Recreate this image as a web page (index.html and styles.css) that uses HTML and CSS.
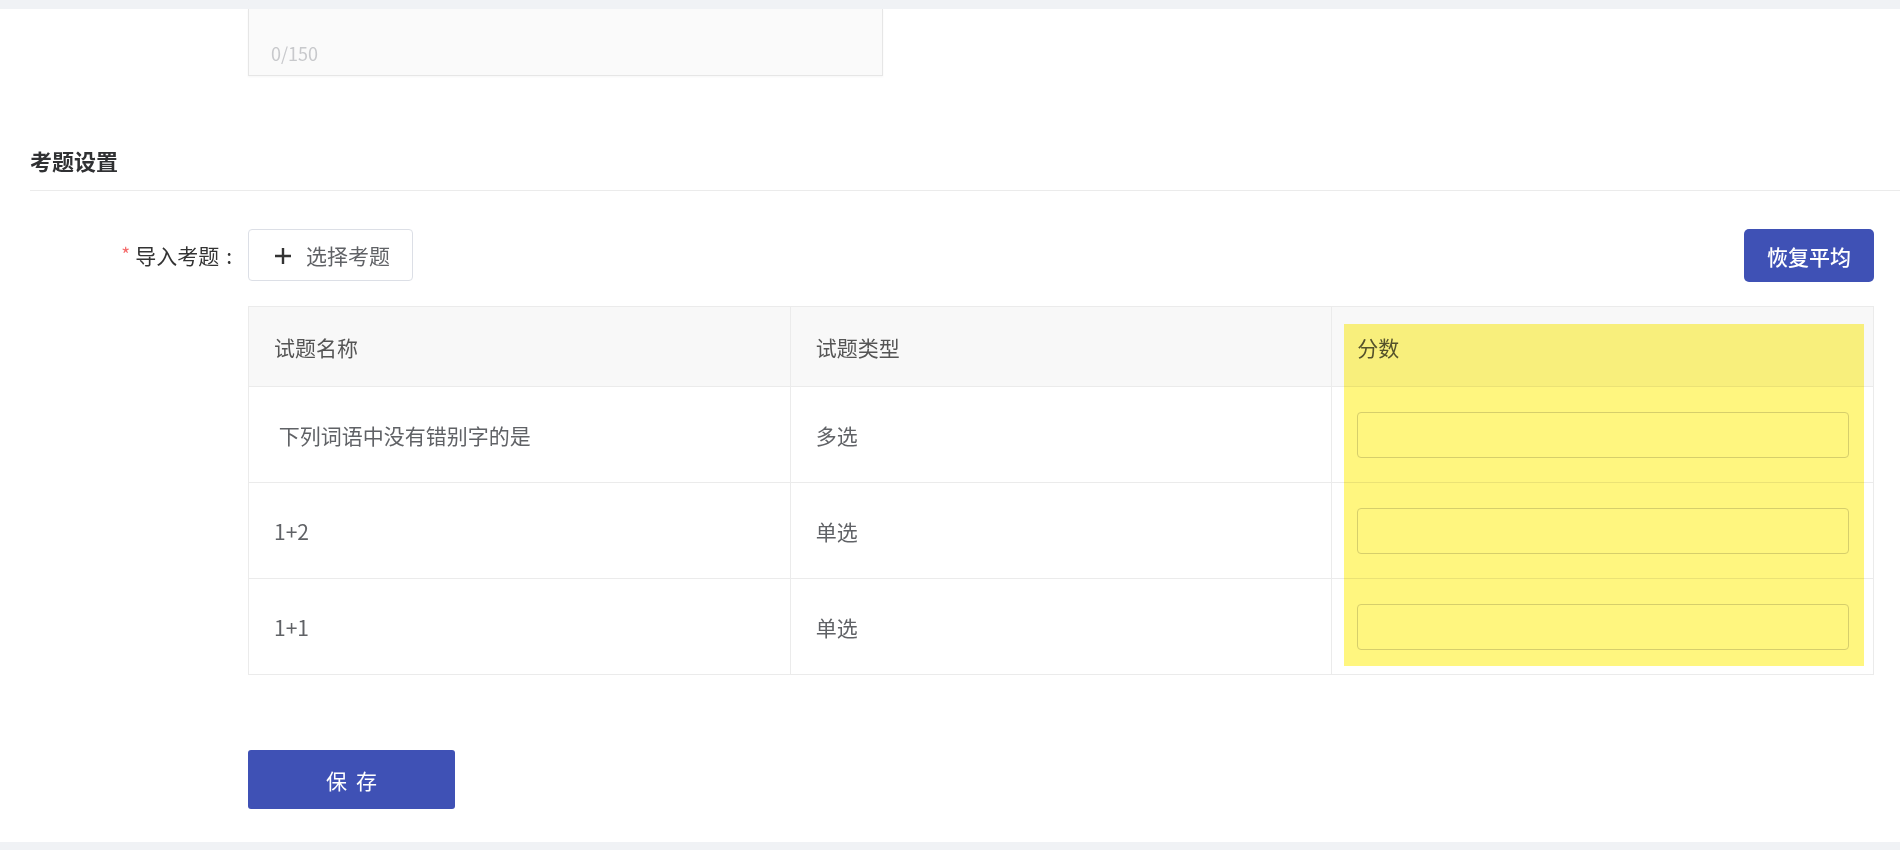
FILE: index.html
```html
<!DOCTYPE html>
<html lang="zh-CN">
<head>
  <meta charset="UTF-8">
  <meta name="viewport" content="width=device-width, initial-scale=1.0">
  <title>考题设置</title>
  <link rel="stylesheet" href="styles.css">
</head>
<body>
  <div class="page">
    <main class="panel">
      <!-- Remark box (scrolled, top cut off) -->
      <div class="remark">
        <span class="remark-count">0/150</span>
      </div>

      <h2 class="section-title">考题设置</h2>

      <!-- Questions -->
      <div class="form-item first">
        <label class="form-label"><span class="required">*</span>导入考题<span class="colon">:</span></label>
        <div class="form-content">
          <div class="toolbar">
            <button type="button" class="btn-plain">
              <svg width="16" height="16" viewBox="0 0 16 16"><path d="M8 0v16M0 8h16" stroke="#333" stroke-width="2.4" fill="none"/></svg>
              <span>选择考题</span>
            </button>
            <button type="button" class="btn-primary">恢复平均</button>
          </div>

          <div class="table-wrap">
            <table class="question-table">
              <thead>
                <tr>
                  <th>试题名称</th>
                  <th>试题类型</th>
                  <th>分数</th>
                </tr>
              </thead>
              <tbody>
                <tr>
                  <td>&nbsp;下列词语中没有错别字的是</td>
                  <td>多选</td>
                  <td class="score-cell"><input type="text" class="score-input"></td>
                </tr>
                <tr>
                  <td>1+2</td>
                  <td>单选</td>
                  <td class="score-cell"><input type="text" class="score-input"></td>
                </tr>
                <tr>
                  <td>1+1</td>
                  <td>单选</td>
                  <td class="score-cell"><input type="text" class="score-input"></td>
                </tr>
              </tbody>
            </table>
            <div class="highlight"></div>
          </div>
        </div>
      </div>

      <div class="form-item">
        <div class="form-label"></div>
        <div class="form-content">
          <button type="submit" class="btn-save">保存</button>
        </div>
      </div>
    </main>
  </div>
</body>
</html>
```

FILE: styles.css
```css
* {
  margin: 0;
  padding: 0;
  box-sizing: border-box;
}

body {
  background: #f0f2f5;
  font-family: "Noto Sans CJK SC", "Microsoft YaHei", sans-serif;
  color: #606266;
}

.page {
  padding: 9px 0 8px;
}

.panel {
  background: #fff;
  height: 833px;
  padding-right: 26px;
  overflow: hidden;
}

/* Remark box */
.remark {
  margin-left: 248px;
  width: 635px;
  height: 67px;
  background: #fafafa;
  border: 1px solid #e6e6e6;
  border-top: none;
  box-shadow: 0 1px 2px rgba(0, 0, 0, 0.04);
  display: flex;
  align-items: flex-end;
  padding: 0 22px 13px;
}

.remark-count {
  font-size: 18px;
  line-height: 18px;
  color: #c8c9cc;
}

/* Section title */
.section-title {
  margin: 69px -26px 0 30px;
  font-size: 22px;
  line-height: 30px;
  font-weight: 600;
  color: #303133;
  padding-bottom: 15px;
  border-bottom: 1px solid #ebebeb;
}

/* Form */
.form-item {
  display: flex;
  margin-top: 37px;
}

.form-item.first {
  margin-top: 38px;
}

.form-label {
  width: 248px;
  flex-shrink: 0;
  height: 52px;
  display: flex;
  align-items: center;
  justify-content: flex-end;
  padding-right: 16px;
  font-size: 21px;
  color: #333;
}

.required {
  color: #f56c6c;
  font-size: 19px;
  margin: 0 5px 3px 0;
}

.colon {
  margin-left: 7px;
}

.form-content {
  flex: 1;
}

.toolbar {
  display: flex;
  justify-content: space-between;
  align-items: flex-start;
  height: 52px;
}

.btn-plain {
  height: 52px;
  display: flex;
  align-items: center;
  gap: 15px;
  padding: 0 22px 0 26px;
  background: #fff;
  border: 1px solid #dcdfe6;
  border-radius: 4px;
  font-family: inherit;
  font-size: 21px;
  color: #606266;
}

.btn-plain svg {
  margin-top: 2px;
}

.btn-primary {
  width: 130px;
  height: 53px;
  background: #3f51b5;
  color: #fff;
  border: none;
  border-radius: 5px;
  font-family: inherit;
  font-size: 21px;
  font-weight: 500;
}

/* Table */
.table-wrap {
  position: relative;
  margin-top: 25px;
}

.question-table {
  width: 100%;
  table-layout: fixed;
  border-collapse: separate;
  border-spacing: 0;
  border-top: 1px solid #ebebeb;
  border-left: 1px solid #ebebeb;
}

.question-table th,
.question-table td {
  border-right: 1px solid #ebebeb;
  border-bottom: 1px solid #ebebeb;
  text-align: left;
  font-size: 21px;
  font-weight: normal;
  color: #606266;
  padding: 0 24px 0 25px;
}

.question-table th {
  color: #555;
}

.question-table thead tr {
  height: 80px;
  background: #f8f8f8;
}

.question-table tbody tr {
  height: 96px;
}

.score-cell {
  padding-left: 26px;
}

.score-input {
  width: 100%;
  height: 46px;
  border: 1px solid #d6d6d6;
  border-radius: 4px;
  background: #fff;
}

/* highlighter marker over the score column */
.highlight {
  position: absolute;
  left: 1096px;
  top: 18px;
  width: 520px;
  height: 342px;
  background: #fff67f;
  mix-blend-mode: multiply;
  pointer-events: none;
}

/* Save */
.btn-save {
  margin-top: 38px;
  width: 207px;
  height: 59px;
  background: #3f51b5;
  color: #fff;
  border: none;
  border-radius: 3px;
  font-family: inherit;
  font-size: 21px;
  letter-spacing: 9px;
  padding-left: 9px;
}
```
